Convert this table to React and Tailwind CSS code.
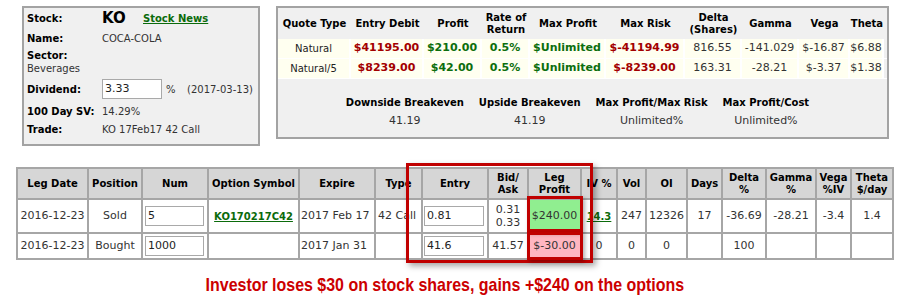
import React from "react";

const quoteCols = "grid-cols-[73px_73px_58px_48px_76px_79px_57px_57px_51px_34px]";

const quoteRows = [
  ["Natural", "$41195.00", "$210.00", "0.5%", "$Unlimited", "$-41194.99", "816.55", "-141.029", "$-16.87", "$6.88"],
  ["Natural/5", "$8239.00", "$42.00", "0.5%", "$Unlimited", "$-8239.00", "163.31", "-28.21", "$-3.37", "$1.38"],
];

const legCols =
  "grid-cols-[69px_52px_64px_89px_74px_45px_64px_38px_51px_34px_27px_39px_33px_42px_48px_33px_40px]";

const legHeaders = [
  "Leg Date", "Position", "Num", "Option Symbol", "Expire", "Type", "Entry", "Bid/ Ask", "Leg Profit",
  "IV %", "Vol", "OI", "Days", "Delta %", "Gamma %", "Vega %IV", "Theta $/day",
];

const twoLine = ["Bid/ Ask", "Leg Profit", "Delta %", "Gamma %", "Vega %IV", "Theta $/day"];

const Input = ({ value, className = "" }) => (
  <div className={`h-[20px] bg-white border border-[#a9a9a9] pl-[2px] flex items-center text-[11px] text-[#222] ${className}`}>
    {value}
  </div>
);

const Cell = ({ children, className = "" }) => (
  <div className={`bg-white flex items-center justify-center text-center whitespace-nowrap ${className}`}>{children}</div>
);

export default function App() {
  return (
    <div className="w-[910px] h-[301px] bg-white font-['DejaVu_Sans',Verdana,sans-serif] text-[11px] text-[#333] overflow-hidden">
      {/* top panels */}
      <div className="flex pt-[6px] pl-[22px] gap-[16px]">
        <div className="w-[238px] h-[140px] bg-[#f0f0f0] border-2 border-[#a3a3a3] pl-[3px] text-[10px] whitespace-nowrap">
          <div className="flex items-center h-[20px]">
            <span className="w-[75px] font-bold text-black">Stock:</span>
            <span className="font-bold text-[15px] text-black w-[41px]">KO</span>
            <span className="font-bold text-[#0b6b0b] underline">Stock News</span>
          </div>
          <div className="flex items-center h-[20px]">
            <span className="w-[75px] font-bold text-black">Name:</span>
            <span>COCA-COLA</span>
          </div>
          <div className="flex flex-col justify-center h-[28px] leading-[13px]">
            <span className="font-bold text-black">Sector:</span>
            <span>Beverages</span>
          </div>
          <div className="flex items-center h-[26px]">
            <span className="w-[75px] font-bold text-black">Dividend:</span>
            <Input value="3.33" className="w-[60px]" />
            <span className="ml-[4px] w-[21px]">%</span>
            <span>(2017-03-13)</span>
          </div>
          <div className="flex items-center h-[18px]">
            <span className="w-[75px] font-bold text-black">100 Day SV:</span>
            <span>14.29%</span>
          </div>
          <div className="flex items-center h-[18px]">
            <span className="w-[75px] font-bold text-black">Trade:</span>
            <span>KO 17Feb17 42 Call</span>
          </div>
        </div>

        <div className="w-[613px] h-[133px] bg-[#f0f0f0] border-2 border-[#a3a3a3]">
          <div className={`grid ${quoteCols} h-[31px] font-bold text-black text-[10px] leading-[12px]`}>
            <div className="flex items-center justify-center">Quote Type</div>
            <div className="flex items-center justify-center">Entry Debit</div>
            <div className="flex items-center justify-center">Profit</div>
            <div className="flex items-center justify-center text-center">Rate of<br />Return</div>
            <div className="flex items-center justify-center">Max Profit</div>
            <div className="flex items-center justify-center">Max Risk</div>
            <div className="flex items-center justify-center text-center">Delta<br />(Shares)</div>
            <div className="flex items-center justify-center">Gamma</div>
            <div className="flex items-center justify-center">Vega</div>
            <div className="flex items-center justify-center">Theta</div>
          </div>
          {quoteRows.map((r, i) => (
            <div key={i} className={`grid ${quoteCols} h-[20px] border-b border-white`}>
              {r.map((v, j) => {
                let tone = "text-[#333] text-[11px]";
                if (j === 0) tone = "text-[#222] text-[10px]";
                if (j === 1 || j === 5) tone = "text-[#a30000] font-bold text-[11px]";
                if (j >= 2 && j <= 4) tone = "text-[#0d6e0d] font-bold text-[11px]";
                return (
                  <div
                    key={j}
                    className={`bg-[#fffff0] border-r-2 border-white flex items-center justify-center whitespace-nowrap overflow-hidden ${tone}`}
                  >
                    {v}
                  </div>
                );
              })}
            </div>
          ))}
          <div className="flex justify-center gap-[15px] pr-[10px] mt-[15px]">
            {[
              ["Downside Breakeven", "41.19"],
              ["Upside Breakeven", "41.19"],
              ["Max Profit/Max Risk", "Unlimited%"],
              ["Max Profit/Cost", "Unlimited%"],
            ].map(([k, v]) => (
              <div key={k} className="flex flex-col items-center">
                <span className="font-bold text-black text-[10px] h-[18px] leading-[18px]">{k}</span>
                <span className="text-[11px] h-[18px] leading-[18px]">{v}</span>
              </div>
            ))}
          </div>
        </div>
      </div>

      {/* legs table */}
      <div className="relative ml-[16px] mt-[21px] w-[878px]">
        <div className={`grid ${legCols} gap-[2px] p-[2px] bg-[#a6a6a6]`}>
          {legHeaders.map((h) => {
            const parts = h.split(" ");
            return (
              <Cell key={h} className="h-[29px] !bg-[#d6d6d6] font-bold text-black text-[10px] leading-[12px]">
                {twoLine.includes(h) ? (
                  <span>
                    {parts[0]}
                    <br />
                    {parts[1]}
                  </span>
                ) : (
                  h
                )}
              </Cell>
            );
          })}

          {/* row 1 */}
          <Cell className="h-[32px]">2016-12-23</Cell>
          <Cell>Sold</Cell>
          <Cell className="justify-start pl-[2px]">
            <Input value="5" className="w-[59px]" />
          </Cell>
          <Cell className="font-bold text-[10px] text-[#0b6b0b] underline">KO170217C42</Cell>
          <Cell className="justify-start pl-[1px]">2017 Feb 17</Cell>
          <Cell className="justify-start pl-[2px]">42 Call</Cell>
          <Cell className="justify-start pl-[1px]">
            <Input value="0.81" className="w-[60px]" />
          </Cell>
          <Cell className="leading-[13px]">
            <span>
              0.31
              <br />
              0.33
            </span>
          </Cell>
          <Cell className="!bg-[#90ee90]">$240.00</Cell>
          <Cell className="font-bold text-[10px] text-[#0b6b0b] underline">14.3</Cell>
          <Cell>247</Cell>
          <Cell>12326</Cell>
          <Cell>17</Cell>
          <Cell>-36.69</Cell>
          <Cell>-28.21</Cell>
          <Cell>-3.4</Cell>
          <Cell>1.4</Cell>

          {/* row 2 */}
          <Cell className="h-[24px]">2016-12-23</Cell>
          <Cell>Bought</Cell>
          <Cell className="justify-start pl-[2px]">
            <Input value="1000" className="w-[59px]" />
          </Cell>
          <Cell />
          <Cell className="justify-start pl-[1px]">2017 Jan 31</Cell>
          <Cell />
          <Cell className="justify-start pl-[1px]">
            <Input value="41.6" className="w-[60px]" />
          </Cell>
          <Cell>41.57</Cell>
          <Cell className="!bg-[#ffb6c1]">$-30.00</Cell>
          <Cell>0</Cell>
          <Cell>0</Cell>
          <Cell>0</Cell>
          <Cell />
          <Cell>100</Cell>
          <Cell />
          <Cell />
          <Cell />
        </div>

        {/* red highlight boxes */}
        <div className="absolute left-[390px] top-[-4px] w-[187px] h-[100px] border-[3px] border-[#c00000] shadow-[3px_3px_6px_rgba(0,0,0,0.35)]" />
        <div className="absolute left-[511px] top-[29px] w-[56px] h-[36px] border-[3px] border-[#c00000] shadow-[2px_2px_4px_rgba(0,0,0,0.3)]" />
        <div className="absolute left-[511px] top-[65px] w-[56px] h-[28px] border-[3px] border-[#c00000] shadow-[2px_2px_4px_rgba(0,0,0,0.3)]" />
      </div>

      <div className="flex justify-center pr-[20px] mt-[14px]">
        <span className="inline-block scale-x-[0.84] font-['Liberation_Sans',Arial,sans-serif] font-bold text-[19px] text-[#cc0000] leading-[22px] whitespace-nowrap">
          Investor loses $30 on stock shares, gains +$240 on the options
        </span>
      </div>
    </div>
  );
}
